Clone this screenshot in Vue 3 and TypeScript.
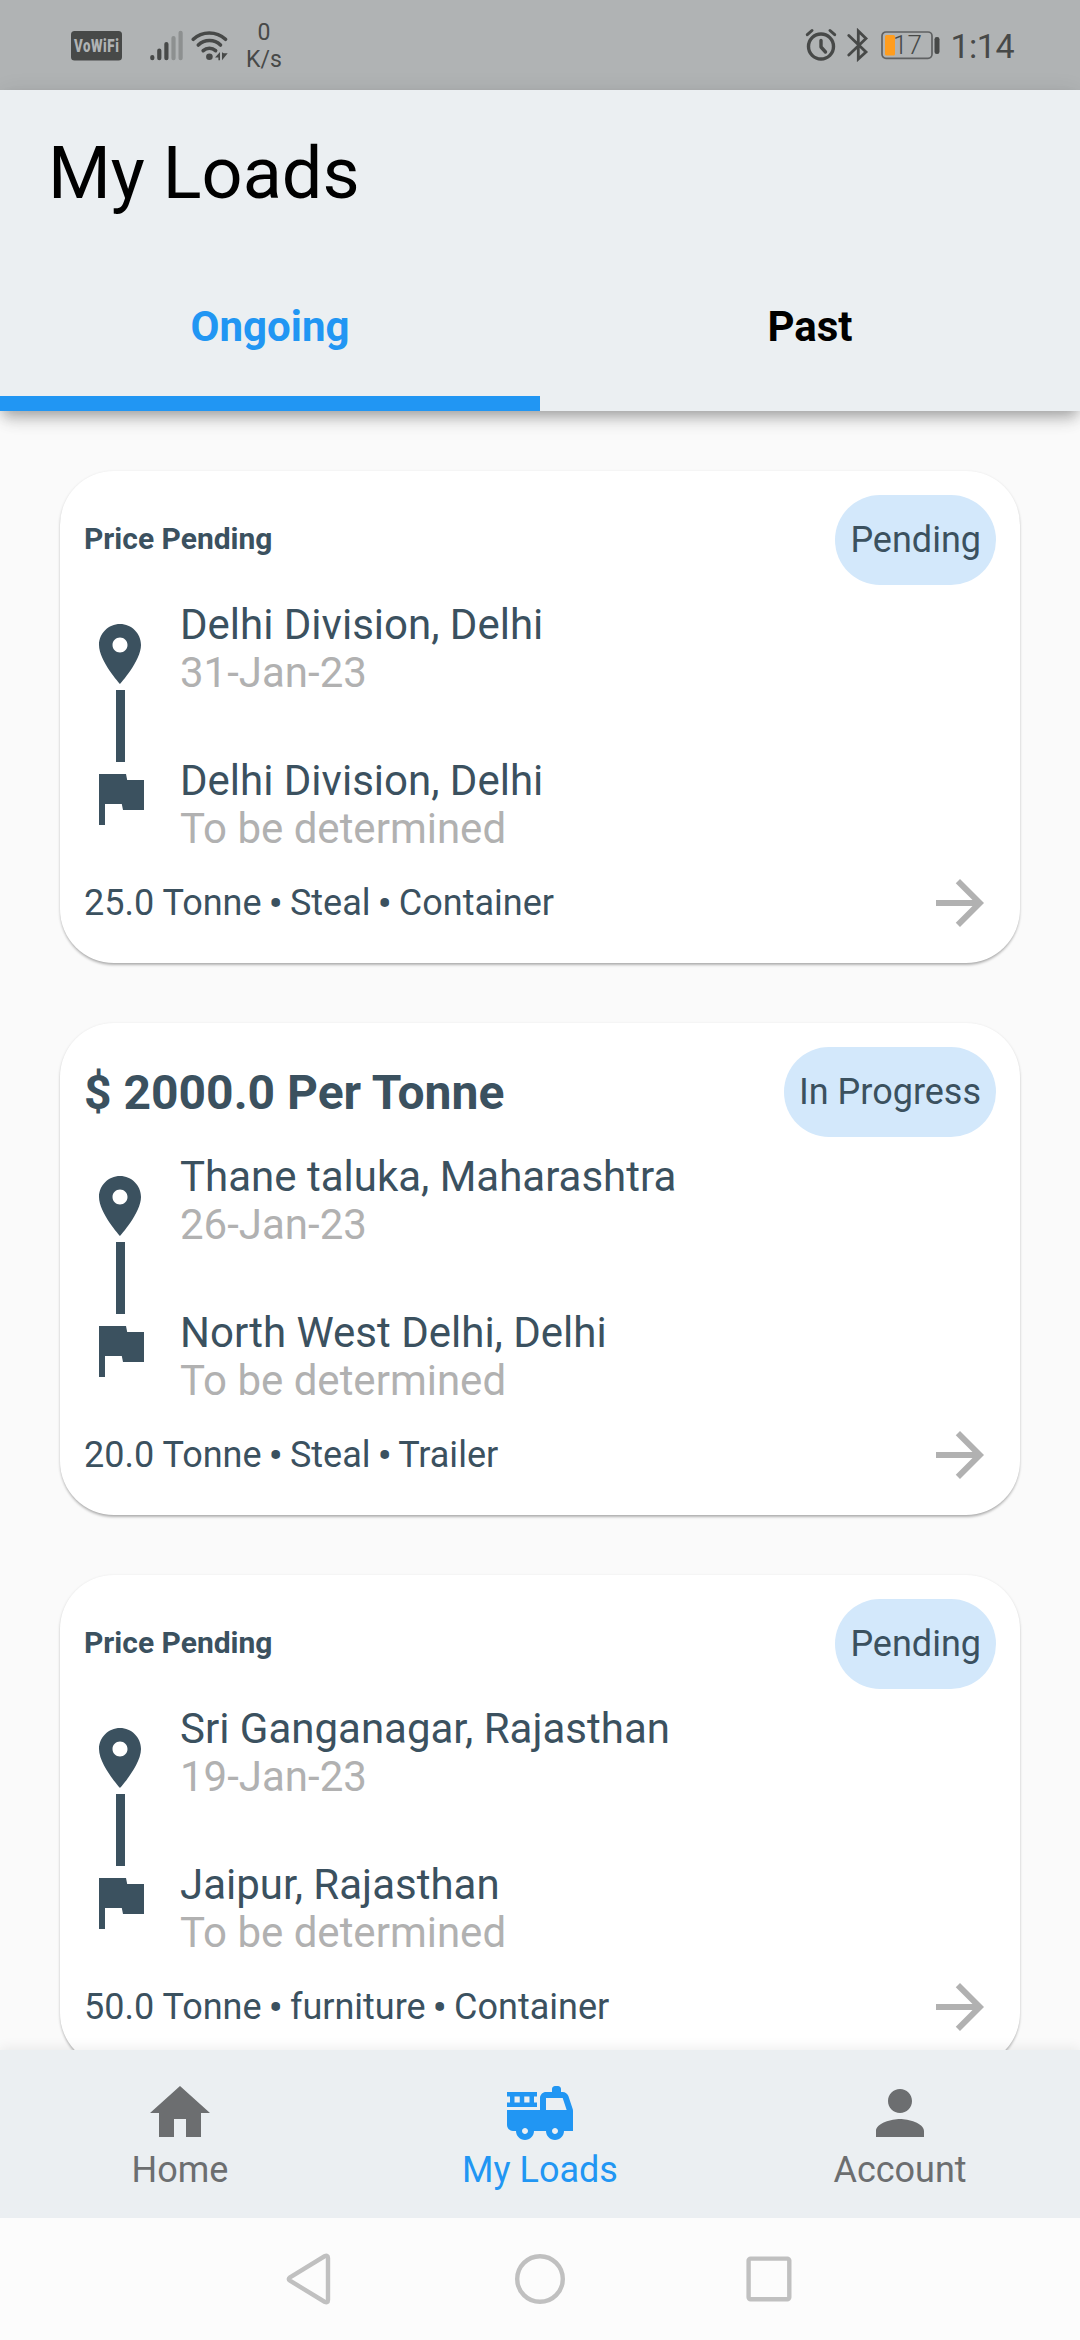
<script setup lang="ts">
interface Load {
  price: string
  priced: boolean
  status: string
  from: string
  date: string
  to: string
  weight: string
  goods: string
  vehicle: string
}

interface NavItem {
  label: string
  active: boolean
  path: string
}

const tabs: { label: string; active: boolean }[] = [
  { label: 'Ongoing', active: true },
  { label: 'Past', active: false },
]

const loads: Load[] = [
  { price: 'Price Pending', priced: false, status: 'Pending', from: 'Delhi Division, Delhi', date: '31-Jan-23', to: 'Delhi Division, Delhi', weight: '25.0 Tonne', goods: 'Steal', vehicle: 'Container' },
  { price: '$ 2000.0 Per Tonne', priced: true, status: 'In Progress', from: 'Thane taluka, Maharashtra', date: '26-Jan-23', to: 'North West Delhi, Delhi', weight: '20.0 Tonne', goods: 'Steal', vehicle: 'Trailer' },
  { price: 'Price Pending', priced: false, status: 'Pending', from: 'Sri Ganganagar, Rajasthan', date: '19-Jan-23', to: 'Jaipur, Rajasthan', weight: '50.0 Tonne', goods: 'furniture', vehicle: 'Container' },
]

const navItems: NavItem[] = [
  { label: 'Home', active: false, path: 'M10 20v-6h4v6h5v-8h3L12 3 2 12h3v8z' },
  {
    label: 'My Loads',
    active: true,
    path: 'M22.9 10.69l-1.44-4.32C21.18 5.55 20.42 5 19.56 5H19V4c0-.55-.45-1-1-1h-1c-.55 0-1 .45-1 1v1h-2c-1.1 0-2 .9-2 2v4H1v5c0 1.1.9 2 2 2h1c0 1.66 1.34 3 3 3s3-1.34 3-3h4c0 1.66 1.34 3 3 3s3-1.34 3-3h3v-6.68c0-.21-.03-.42-.1-.63zM7 19c-.55 0-1-.45-1-1s.45-1 1-1 1 .45 1 1-.45 1-1 1zm10 0c-.55 0-1-.45-1-1s.45-1 1-1 1 .45 1 1-.45 1-1 1zm-3-8V7h5.56l1.33 4H14zM11 8.5h-1v-2h1V5H1v1.5h1v2H1V10h10V8.5zm-5.75 0H3.5v-2h1.75v2zm3.25 0H6.75v-2H8.5v2z',
  },
  { label: 'Account', active: false, path: 'M12 12c2.21 0 4-1.79 4-4s-1.79-4-4-4-4 1.79-4 4 1.79 4 4 4zm0 2c-2.67 0-8 1.34-8 4v2h16v-2c0-2.66-5.33-4-8-4z' },
]
</script>

<template>
  <div class="screen">
    <div class="status-bar">
      <div class="status-left">
        <svg class="vowifi" width="51" height="30" viewBox="0 0 51 30">
          <rect width="51" height="29.5" rx="3.5" fill="#474948" />
          <text x="4.3" y="21.500" transform="scale(0.7 1)" textLength="64" class="vowifi-text">VoWiFi</text>
        </svg>
        <svg class="signal" width="34" height="32" viewBox="0 0 34 32" stroke-width="4.2" stroke-linecap="round">
          <g stroke="#474948"><path d="M2.3 27v1.2M9.3 20.5v7.7M16.4 14v14.2" /></g>
          <g stroke="#8d9090"><path d="M23.5 8v20.2M30.6 2.8v25.4" /></g>
        </svg>
        <svg class="wifi" width="38" height="32" viewBox="0 0 38 32">
          <g fill="none" stroke="#474948" stroke-width="3.6" stroke-linecap="round">
            <path d="M2.3 9.3C11 .8 25.500 .8 34.500 9.3" />
            <path d="M7.300 15C13.500 9 23.500 9 29.500 15" />
            <path d="M12.200 20.700C15.800 17.400 21 17.400 24.600 20.700" />
          </g>
          <circle cx="18.400" cy="26.700" r="3.300" fill="#474948" />
          <path d="M24 27.500l5-5.500v8.300h-1.600v-2.800zM31 22.300v8l5.700-7h-4z" fill="#474948" />
        </svg>
        <div class="speed"><span>0</span><span>K/s</span></div>
      </div>
      <div class="status-right">
        <svg width="32" height="34" viewBox="0 0 32 34" fill="none" stroke="#474948" stroke-linecap="round">
          <circle cx="16" cy="18.500" r="12.500" stroke-width="3.400" />
          <path d="M16 12.500v6.500l4.500 5" stroke-width="3.400" stroke-linejoin="round" />
          <path d="M2.300 6.700L7 2.500M29.700 6.700L25 2.500" stroke-width="3" />
        </svg>
        <svg class="bluetooth" width="22" height="34" viewBox="0 0 22 34" fill="none" stroke="#474948" stroke-width="2.800" stroke-linecap="round" stroke-linejoin="miter">
          <path d="M1.800 7.500L19 24l-7.700 7V3L19 10.500 1.800 27" />
        </svg>
        <svg class="battery" width="60" height="30" viewBox="0 0 60 30">
          <rect x="1" y="2" width="50" height="26.300" rx="4" fill="none" stroke="#5f6162" stroke-width="1.700" />
          <rect x="4" y="5" width="10" height="20.500" rx="1.500" fill="#ff9d1e" />
          <rect x="53.500" y="7" width="5" height="17" rx="2.300" fill="#474948" />
          <text x="12" y="24.300" class="battery-text">17</text>
        </svg>
        <span class="clock">1:14</span>
      </div>
    </div>

    <header class="app-bar">
      <h1 class="title">My Loads</h1>
      <nav class="tabs">
        <button v-for="tab in tabs" :key="tab.label" class="tab" :class="{ active: tab.active }">{{ tab.label }}</button>
      </nav>
    </header>

    <main class="list">
      <article v-for="(load, i) in loads" :key="i" class="card">
        <div class="card-head">
          <span class="price" :class="{ priced: load.priced }">{{ load.price }}</span>
          <span class="status">{{ load.status }}</span>
        </div>
        <div class="route">
          <div class="markers">
            <svg width="72" height="72" viewBox="0 0 24 24"><path d="M12 2C8.130 2 5 5.130 5 9c0 5.250 7 13 7 13s7-7.750 7-13c0-3.870-3.130-7-7-7zm0 9.500c-1.380 0-2.500-1.120-2.500-2.500s1.120-2.500 2.500-2.500 2.500 1.120 2.500 2.500-1.120 2.500-2.500 2.500z" /></svg>
            <div class="connector"></div>
            <svg width="72" height="72" viewBox="0 0 24 24"><path d="M14.400 6L14 4H5v17h2v-7h5.600l.4 2h7V6z" /></svg>
          </div>
          <div class="stops">
            <div class="stop"><span>{{ load.from }}</span><span class="muted">{{ load.date }}</span></div>
            <div class="stop"><span>{{ load.to }}</span><span class="muted">To be determined</span></div>
          </div>
        </div>
        <div class="card-foot">
          <span>{{ load.weight }} <span class="dot">•</span> {{ load.goods }} <span class="dot">•</span> {{ load.vehicle }}</span>
          <svg width="72" height="72" viewBox="0 0 24 24"><path d="M12 4l-1.410 1.410L16.170 11H4v2h12.170l-5.580 5.590L12 20l8-8z" fill="#b1b1b1" /></svg>
        </div>
      </article>
    </main>

    <nav class="bottom-nav">
      <div v-for="item in navItems" :key="item.label" class="nav-item" :class="{ active: item.active }">
        <svg width="72" height="72" viewBox="0 0 24 24"><path :d="item.path" fill="currentColor" fill-rule="evenodd" /></svg>
        <span>{{ item.label }}</span>
      </div>
    </nav>

    <div class="system-nav">
      <svg width="54" height="54" viewBox="0 0 54 54"><path d="M6 25.300L40.500 4.300Q44 2.700 44 6v42Q44 51.300 40.500 49.700L6 28.700Q3.500 27 6 25.300z" /></svg>
      <svg width="54" height="54" viewBox="0 0 54 54"><circle cx="27" cy="27" r="22.800" /></svg>
      <svg width="54" height="54" viewBox="0 0 54 54"><rect x="6.600" y="6.600" width="40.700" height="40.700" rx="2" /></svg>
    </div>
  </div>
</template>

<style>
body {
  margin: 0;
}
</style>

<style scoped>
.screen {
  width: 1080px;
  height: 2340px;
  display: flex;
  flex-direction: column;
  overflow: hidden;
  background: #fafafa;
  font-family: Roboto, "Liberation Sans", sans-serif;
  color: #3b515f;
}
svg {
  display: block;
  flex: none;
}
.status-bar {
  height: 90px;
  flex: none;
  display: flex;
  justify-content: space-between;
  background: #b0b3b4;
  color: #474948;
}
.status-left,
.status-right {
  display: flex;
  align-items: flex-start;
}
.status-left {
  padding-left: 71px;
}
.status-right {
  padding: 28px 66px 0 0;
}
.vowifi {
  margin-top: 31px;
}
.vowifi-text {
  font: 900 19px Roboto, sans-serif;
  fill: #b0b3b4;
}
.signal {
  margin: 30px 0 0 28px;
}
.wifi {
  margin: 30px 0 0 7px;
}
.speed {
  display: flex;
  flex-direction: column;
  align-items: center;
  margin: 19px 0 0 17px;
  font-size: 23px;
  line-height: 27px;
}
.bluetooth {
  margin-left: 10px;
}
.battery {
  margin: 2px 0 0 12px;
}
.battery-text {
  font: 300 26px Roboto, sans-serif;
  fill: #474948;
}
.clock {
  margin-left: 9px;
  font-size: 34px;
  letter-spacing: -0.5px;
  line-height: 37px;
}
.app-bar {
  height: 321px;
  flex: none;
  display: flex;
  flex-direction: column;
  justify-content: space-between;
  background: #ebeff2;
  z-index: 2;
  box-shadow: 0 6px 12px -3px rgba(0, 0, 0, 0.2), 0 12px 15px -3px rgba(0, 0, 0, 0.14), 0 3px 24px -3px rgba(0, 0, 0, 0.12);
}
.title {
  margin: 0;
  padding: 42px 0 0 48px;
  font-size: 72px;
  font-weight: 400;
  line-height: 84px;
  color: #000;
}
.tabs {
  display: flex;
}
.tab {
  flex: 1;
  height: 168px;
  border: 0;
  padding: 0;
  background: none;
  font: 700 42px/48px Roboto, sans-serif;
  color: #000;
}
.tab.active {
  color: #2196f3;
  box-shadow: inset 0 -15px #2196f3;
}
.list {
  flex: 1;
  min-height: 0;
  display: flex;
  flex-direction: column;
  gap: 60px;
  padding: 60px 60px 0;
  overflow: hidden;
}
.card {
  height: 444px;
  flex: none;
  padding: 24px;
  border-radius: 54px;
  background: #fff;
  box-shadow: 0 3px 3px -1px rgba(0, 0, 0, 0.22), 0 1px 3px rgba(0, 0, 0, 0.16);
}
.card-head {
  height: 90px;
  display: flex;
  align-items: center;
  justify-content: space-between;
}
.price {
  padding-bottom: 3px;
  font-size: 30px;
  font-weight: 700;
}
.price.priced {
  padding-bottom: 0;
  font-size: 48px;
}
.status {
  padding: 0 15px;
  border-radius: 45px;
  background: #d3e8fb;
  font-size: 36px;
  line-height: 90px;
}
.route {
  height: 282px;
  display: flex;
}
.markers {
  width: 72px;
  padding-top: 33px;
  fill: #3b515f;
}
.connector {
  width: 9px;
  height: 72px;
  margin: 0 auto;
  background: #3b515f;
}
.stops {
  display: flex;
  flex-direction: column;
  gap: 60px;
  padding: 16px 0 0 24px;
  font-size: 42px;
  line-height: 48px;
}
.stop {
  display: flex;
  flex-direction: column;
}
.muted {
  color: #b1b1b1;
}
.card-foot {
  height: 72px;
  display: flex;
  align-items: center;
  justify-content: space-between;
  font-size: 36px;
}
.dot {
  display: inline-flex;
  justify-content: center;
  position: relative;
  top: 3px;
  width: 10.5px;
  font-size: 43px;
  line-height: 36px;
}
.bottom-nav {
  height: 168px;
  flex: none;
  display: flex;
  background: #ebeff2;
  z-index: 2;
  box-shadow: 0 -2px 12px rgba(0, 0, 0, 0.07);
}
.nav-item {
  flex: 1;
  display: flex;
  flex-direction: column;
  align-items: center;
  padding-top: 27px;
  font-size: 36px;
  line-height: 42px;
  color: #6c6e70;
}
.nav-item.active {
  color: #2196f3;
}
.system-nav {
  height: 122px;
  flex: none;
  display: flex;
  align-items: center;
  justify-content: center;
  gap: 175px;
  background: #fcfcfc;
  z-index: 3;
  fill: none;
  stroke: #c0c0c0;
  stroke-width: 4.4px;
}
</style>
